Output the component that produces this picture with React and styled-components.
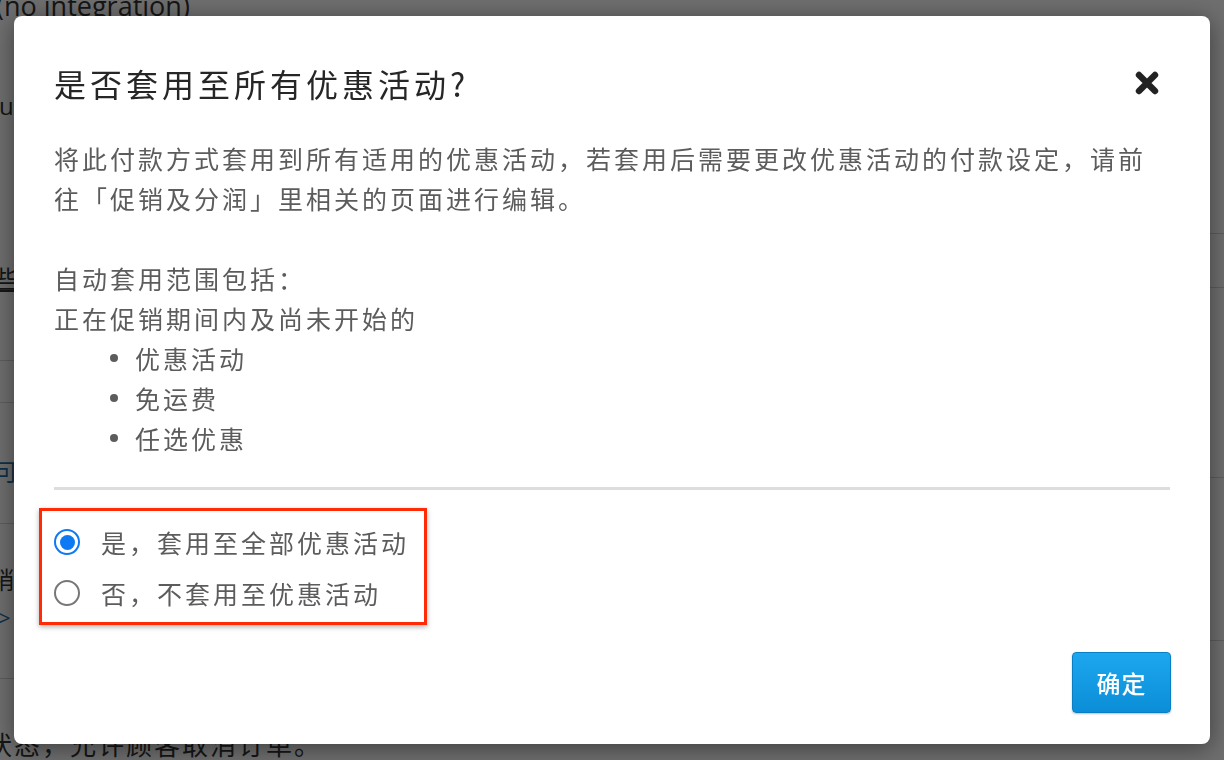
import React from "react";
import styled, { createGlobalStyle } from "styled-components";

const Global = createGlobalStyle`
  html, body { margin: 0; padding: 0; }
  body {
    width: 1224px;
    height: 760px;
    overflow: hidden;
    background: #ffffff;
    font-family: "Noto Sans CJK SC", "Noto Sans", sans-serif;
  }
  * { box-sizing: border-box; }
`;

/* ---------- page behind the dialog ---------- */
const Page = styled.div`
  display: grid;
  grid-template-columns: 1fr 34px;
  height: 760px;
  overflow: hidden;
  background: #fff;
`;

const Column = styled.div`
  display: flex;
  flex-direction: column;
`;

const Row = styled.div`
  flex: none;
  height: ${(p) => p.$h}px;
  padding-top: ${(p) => p.$pt || 0}px;
  margin-top: ${(p) => p.$mt || 0}px;
  border-bottom: ${(p) => (p.$line ? "1px solid #d6d6d6" : "none")};
`;

const PageText = styled.div`
  font-family: "Open Sans", "Noto Sans CJK SC", sans-serif;
  font-size: ${(p) => p.$size || 22}px;
  line-height: 24px;
  letter-spacing: ${(p) => p.$ls || 0}px;
  white-space: nowrap;
  color: ${(p) => (p.$link ? "#1f6fa8" : "#333")};
  margin-left: ${(p) => p.$ml || 0}px;
  margin-top: ${(p) => p.$mt || 0}px;
  text-decoration: ${(p) => (p.$underline ? "underline" : "none")};
`;

/* ---------- dialog ---------- */
const Overlay = styled.div`
  position: fixed;
  inset: 0;
  background: rgba(0, 0, 0, 0.57);
  display: flex;
  align-items: flex-start;
  justify-content: center;
  padding: 16px 14px;
`;

const Modal = styled.div`
  width: 1196px;
  background: #fff;
  border-radius: 8px;
  box-shadow: 0 4px 24px rgba(0, 0, 0, 0.45);
  padding: 40px 40px 31px 40px;
  display: flex;
  flex-direction: column;
`;

const Header = styled.div`
  height: 54px;
  display: flex;
  align-items: center;
  justify-content: space-between;
`;

const Title = styled.h2`
  margin: 0;
  font-size: 32px;
  font-weight: 400;
  letter-spacing: 4px;
  color: #262626;
  line-height: 54px;
`;

const CloseButton = styled.button`
  border: none;
  background: none;
  padding: 0;
  margin-right: 11px;
  width: 24px;
  height: 24px;
  display: flex;
  cursor: pointer;
`;

const Body = styled.div`
  margin-top: 28px;
  font-size: 25px;
  letter-spacing: 3px;
  line-height: 40px;
  color: #5c5c5c;
`;

const Paragraph = styled.p`
  margin: 0 0 ${(p) => p.$mb || 0}px 0;
`;

const BulletList = styled.ul`
  list-style: none;
  margin: 0;
  padding: 0;
`;

const Bullet = styled.li`
  display: flex;
  align-items: center;
  padding-left: 56px;
  &::before {
    content: "";
    width: 8px;
    height: 8px;
    border-radius: 50%;
    background: #5c5c5c;
    margin-right: 17px;
    flex: none;
  }
`;

const Divider = styled.hr`
  margin: 29px 0 0 0;
  border: none;
  height: 3px;
  background: #dddddd;
`;

const Highlight = styled.div`
  align-self: flex-start;
  margin: 18px 0 0 -15px;
  border: 3px solid #ff2a06;
  box-shadow: 0 2px 5px rgba(0, 0, 0, 0.3);
  padding: 8px 15px 6px 12px;
  display: flex;
  flex-direction: column;
  gap: 5px;
`;

const Option = styled.label`
  height: 46px;
  display: flex;
  align-items: center;
  gap: 21px;
  font-size: 25px;
  letter-spacing: 3px;
  color: #5c5c5c;
  cursor: pointer;
`;

const RadioMark = styled.span`
  flex: none;
  width: 26px;
  height: 26px;
  border-radius: 50%;
  border: 2px solid ${(p) => (p.$checked ? "#0d79f2" : "#777")};
  display: flex;
  align-items: center;
  justify-content: center;
  &::after {
    content: "";
    width: 15px;
    height: 15px;
    border-radius: 50%;
    background: ${(p) => (p.$checked ? "#0d79f2" : "transparent")};
  }
`;

const Footer = styled.div`
  margin-top: 27px;
  display: flex;
  justify-content: flex-end;
`;

const PrimaryButton = styled.button`
  width: 99px;
  height: 61px;
  margin-right: -1px;
  border: 1px solid #0a7ec4;
  border-radius: 4px;
  background: linear-gradient(#1da7ee, #0b8ed7);
  box-shadow: 0 1px 2px rgba(0, 0, 0, 0.25);
  color: #fff;
  font-family: "Noto Sans CJK SC", sans-serif;
  font-size: 24px;
  font-weight: 500;
  letter-spacing: 1px;
  cursor: pointer;
`;

const CloseIcon = () => (
  <svg width="24" height="24" viewBox="0 0 24 24">
    <path
      d="M4 4 L20 20 M20 4 L4 20"
      stroke="#222"
      strokeWidth="6.4"
      strokeLinecap="round"
    />
  </svg>
);

export default function App() {
  const [choice, setChoice] = React.useState("yes");
  return (
    <>
      <Global />
      <Page>
        <Column>
          <Row $h={24} $mt={-6}>
            <PageText $ml={-4} $size={27}>(no integration)</PageText>
          </Row>
          <Row $h={76} />
          <Row $h={24}>
            <PageText $ml={-1} $size={24}>url</PageText>
          </Row>
          <Row $h={149} />
          <Row $h={24}>
            <PageText $ml={-6} $size={24} $underline>些设定</PageText>
          </Row>
          <Row $h={70} $line />
          <Row $h={42} $line />
          <Row $h={121} $pt={57} $line>
            <PageText $ml={-6} $size={24} $link>可以</PageText>
          </Row>
          <Row $h={155} $pt={44} $line>
            <PageText $ml={-10} $size={24}>销售</PageText>
            <PageText $ml={-2} $mt={13} $link>&gt;</PageText>
          </Row>
          <Row $h={81} $pt={54}>
            <PageText $ml={-14} $size={26} $ls={2}>
              状态，允许顾客取消订单。
            </PageText>
          </Row>
        </Column>
        <Column>
          <Row $h={234} $line />
          <Row $h={54} $line />
          <Row $h={190} $line />
          <Row $h={163} $line />
        </Column>
      </Page>

      <Overlay>
        <Modal role="dialog">
          <Header>
            <Title>是否套用至所有优惠活动?</Title>
            <CloseButton aria-label="close">
              <CloseIcon />
            </CloseButton>
          </Header>
          <Body>
            <Paragraph $mb={40}>
              将此付款方式套用到所有适用的优惠活动，若套用后需要更改优惠活动的付款设定，请前往「促销及分润」里相关的页面进行编辑。
            </Paragraph>
            <Paragraph>自动套用范围包括：</Paragraph>
            <Paragraph>正在促销期间内及尚未开始的</Paragraph>
            <BulletList>
              <Bullet>优惠活动</Bullet>
              <Bullet>免运费</Bullet>
              <Bullet>任选优惠</Bullet>
            </BulletList>
          </Body>
          <Divider />
          <Highlight>
            <Option onClick={() => setChoice("yes")}>
              <RadioMark $checked={choice === "yes"} />
              是，套用至全部优惠活动
            </Option>
            <Option onClick={() => setChoice("no")}>
              <RadioMark $checked={choice === "no"} />
              否，不套用至优惠活动
            </Option>
          </Highlight>
          <Footer>
            <PrimaryButton>确定</PrimaryButton>
          </Footer>
        </Modal>
      </Overlay>
    </>
  );
}
